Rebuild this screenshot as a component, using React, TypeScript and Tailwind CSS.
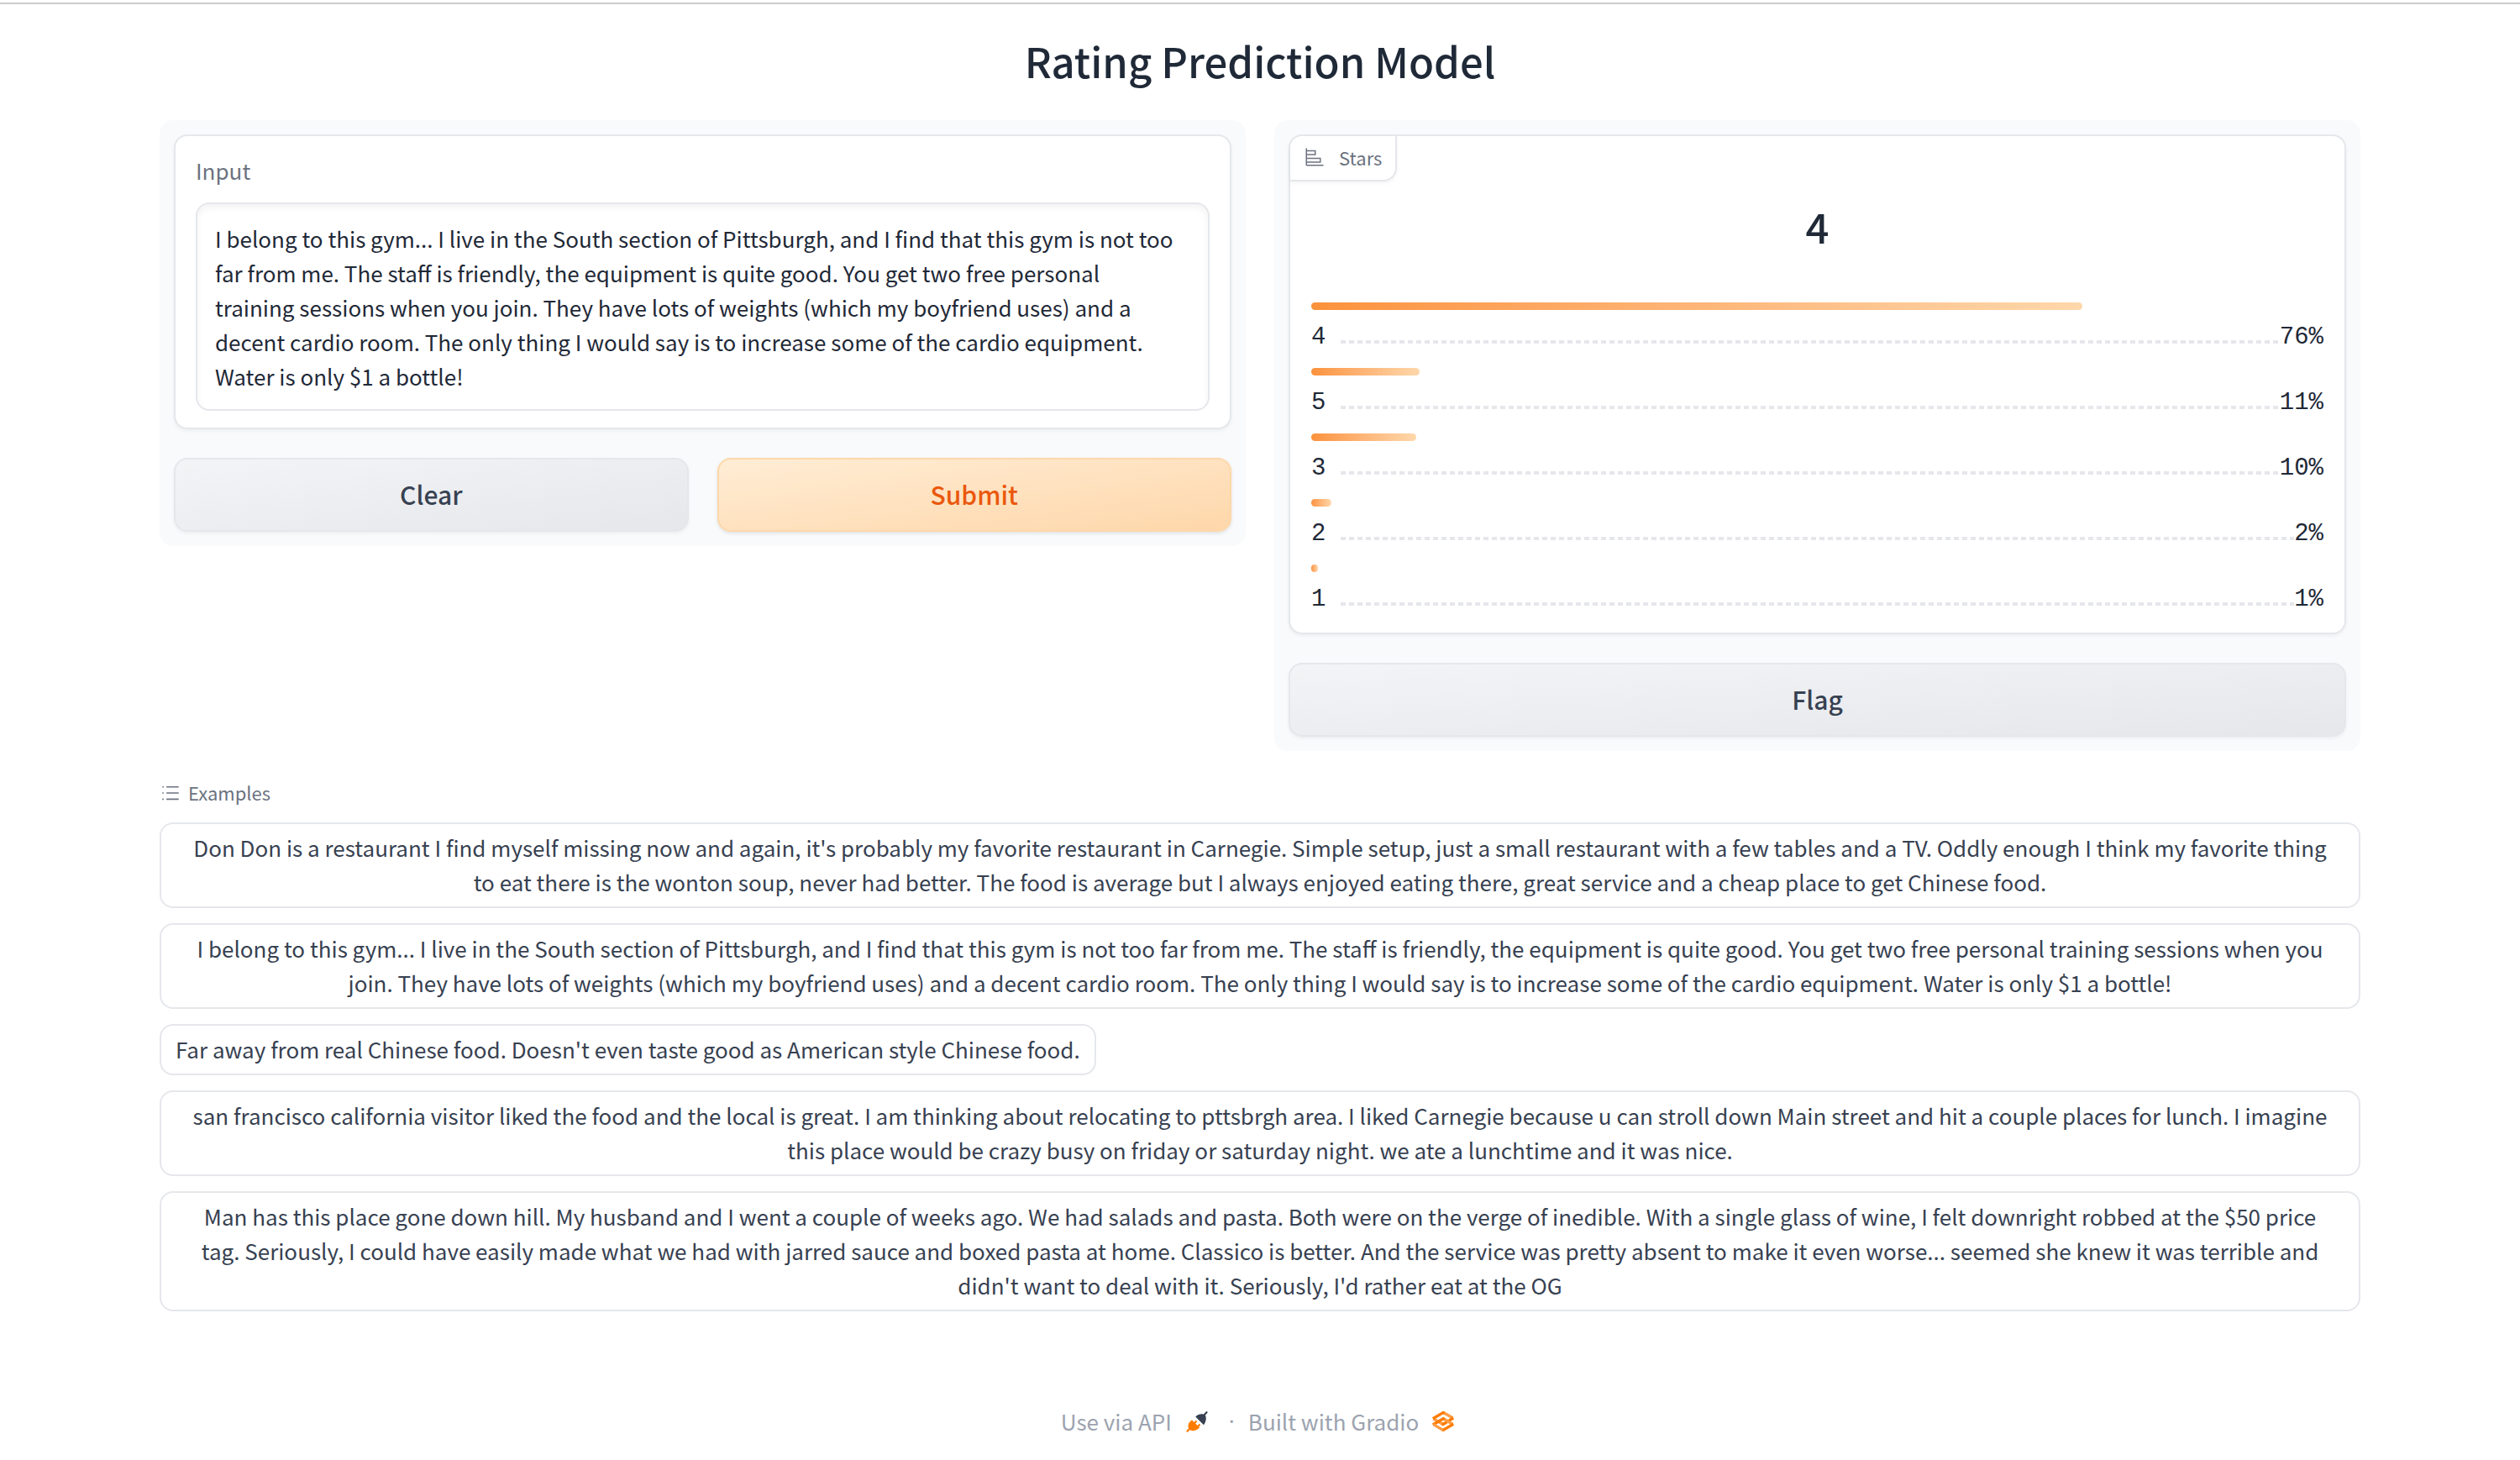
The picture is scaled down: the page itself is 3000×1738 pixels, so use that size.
import type { ReactNode } from "react";

const review = `I belong to this gym... I live in the South section of Pittsburgh, and I find that this gym is not too
far from me. The staff is friendly, the equipment is quite good. You get two free personal
training sessions when you join. They have lots of weights (which my boyfriend uses) and a
decent cardio room. The only thing I would say is to increase some of the cardio equipment.
Water is only $1 a bottle!`;

const examples = [
  `Don Don is a restaurant I find myself missing now and again, it's probably my favorite restaurant in Carnegie. Simple setup, just a small restaurant with a few tables and a TV. Oddly enough I think my favorite thing
to eat there is the wonton soup, never had better. The food is average but I always enjoyed eating there, great service and a cheap place to get Chinese food.`,
  `I belong to this gym... I live in the South section of Pittsburgh, and I find that this gym is not too far from me. The staff is friendly, the equipment is quite good. You get two free personal training sessions when you
join. They have lots of weights (which my boyfriend uses) and a decent cardio room. The only thing I would say is to increase some of the cardio equipment. Water is only $1 a bottle!`,
  `Far away from real Chinese food. Doesn't even taste good as American style Chinese food.`,
  `san francisco california visitor liked the food and the local is great. I am thinking about relocating to pttsbrgh area. I liked Carnegie because u can stroll down Main street and hit a couple places for lunch. I imagine
this place would be crazy busy on friday or saturday night. we ate a lunchtime and it was nice.`,
  `Man has this place gone down hill. My husband and I went a couple of weeks ago. We had salads and pasta. Both were on the verge of inedible. With a single glass of wine, I felt downright robbed at the $50 price
tag. Seriously, I could have easily made what we had with jarred sauce and boxed pasta at home. Classico is better. And the service was pretty absent to make it even worse... seemed she knew it was terrible and
didn't want to deal with it. Seriously, I'd rather eat at the OG`,
];

const confidences = [
  { label: "4", percent: 76, width: "76.2%" },
  { label: "5", percent: 11, width: "10.7%" },
  { label: "3", percent: 10, width: "10.4%" },
  { label: "2", percent: 2, width: "2%" },
  { label: "1", percent: 1, width: "0.66%" },
];

function ChartIcon() {
  return (
    <svg viewBox="0 0 32 32" className="size-6" fill="currentColor" aria-hidden="true">
      <path d="M4 2H2v26a2 2 0 0 0 2 2h26v-2H4v-3h22v-8H4v-4h14V5H4Zm20 17v4H4v-4ZM16 7v4H4V7Z" />
    </svg>
  );
}

function ListIcon() {
  return (
    <svg viewBox="0 0 32 32" className="size-[26px]" fill="currentColor" aria-hidden="true">
      <path d="M10 6h18v2H10zm0 18h18v2H10zm0-9h18v2H10zm-6 0h2v2H4zm0-9h2v2H4zm0 18h2v2H4z" />
    </svg>
  );
}

function PlugIcon() {
  return (
    <svg viewBox="0 0 28 28" className="size-7" aria-hidden="true">
      <path d="M25.5 3.2 22 7" stroke="#374151" strokeWidth="2.2" strokeLinecap="round" />
      <path d="M12.2 8.600 22 18.200c2.600-3.200 3.600-8 2-11.200-3.400-2.800-8-1.800-11.800 1.600z" fill="#374151" />
      <path d="M2.500 25.800 6 22" stroke="#ff7c00" strokeWidth="2.2" strokeLinecap="round" />
      <path
        d="M8 12.500l2.600 2.500 2-2.200 1.600 1.500-2 2.200 2.400 2.400 2-2.200 1.600 1.500-2 2.200.9.9c-2.600 3.700-8.600 5.200-12.100 2.400-3-3.400-1.200-9 3-11.200z"
        fill="#ff7c00"
      />
    </svg>
  );
}

function GradioIcon() {
  return (
    <svg viewBox="0 0 26 26" className="size-[26px]" fill="none" strokeWidth="3.4" aria-hidden="true">
      <path d="M13 2.200 24.500 9" stroke="#ff9d47" />
      <path d="M1.500 10 13 16.500" stroke="#ff9d47" />
      <path d="M0.800 9.800 13 2.600l1.500.8" stroke="#ff7c00" />
      <path d="M25.200 9 13 16.500l-1.500-.8" stroke="#ff7c00" />
      <path d="M13 9.500 24.500 16.500" stroke="#ff9d47" />
      <path d="M14.500 9 .8 17" stroke="#ff7c00" />
      <path d="M1.500 16.600 13 23.400l1 -.6" stroke="#ff9d47" />
      <path d="M25.200 16.200 13 23.400" stroke="#ff7c00" />
    </svg>
  );
}

function Panel({ children }: { children: ReactNode }) {
  return <section className="flex min-w-0 flex-col gap-[34px] rounded-2xl bg-[#f9fafb] p-[17px]">{children}</section>;
}

const secondary =
  "h-[88px] flex-1 rounded-2xl border-2 border-[#e5e7eb] bg-linear-to-br from-[#f3f4f6] to-[#e5e7eb] pb-0.5 text-[30px] leading-10 font-medium text-[#374151] shadow-[0_2px_4px_rgba(0,0,0,0.05)]";

export default function App() {
  return (
    <div className="bg-white pt-[3px] font-['Noto_Sans_CJK_SC',sans-serif] text-[26px] leading-[41px] text-[#1f2937]">
      <div className="border-t-2 border-[#cccccc]" />
      <main className="mx-auto max-w-[2620px]">
        <h1 className="pt-[35px] text-center text-[49px] leading-16 font-medium">Rating Prediction Model</h1>

        <div className="mt-[39px] grid grid-cols-2 items-start gap-[34px]">
          <Panel>
            <div className="flex flex-col rounded-2xl border-2 border-[#e5e7eb] bg-white px-6 pt-5 pb-5 shadow-[0_2px_4px_rgba(0,0,0,0.05)]">
              <label htmlFor="input" className="text-[#6b7280]">
                Input
              </label>
              <textarea
                id="input"
                rows={5}
                defaultValue={review}
                className="mt-[18px] block resize-none overflow-hidden rounded-2xl border-2 border-[#e5e7eb] bg-white px-[21px] pt-5 pb-[19px] inset-shadow-[0_4px_8px_rgba(0,0,0,0.05)]"
              />
            </div>
            <div className="flex gap-[34px]">
              <button type="button" className={secondary}>
                Clear
              </button>
              <button
                type="button"
                className="h-[88px] flex-1 rounded-2xl border-2 border-[#fed7aa] bg-linear-to-br from-[#ffedd5] to-[#fed7aa] pb-0.5 text-[30px] leading-10 font-medium text-[#ea580c] shadow-[0_2px_4px_rgba(0,0,0,0.1)]"
              >
                Submit
              </button>
            </div>
          </Panel>

          <Panel>
            <div className="rounded-2xl border-2 border-[#e5e7eb] bg-white pb-4 shadow-[0_2px_4px_rgba(0,0,0,0.05)]">
              <div className="flex h-[54px] w-fit items-center gap-[17px] rounded-tl-2xl rounded-br-2xl border-r-2 border-b-2 border-[#e5e7eb] pr-4 pb-0.5 pl-[17px] text-[22px] text-[#6b7280] shadow-[0_2px_4px_rgba(0,0,0,0.05)]">
                <ChartIcon />
                Stars
              </div>
              <h2 className="pt-[21px] text-center text-[49px] leading-16 font-medium">4</h2>
              <dl className="mt-[59px] flex flex-col gap-[13px] px-[25px]">
                {confidences.map((c) => (
                  <div key={c.label}>
                    <div
                      className="h-[9px] rounded-full bg-linear-to-r from-[#fb923c] to-[#fed7aa]"
                      style={{ width: c.width }}
                    />
                    <div className="mt-2.5 flex items-baseline font-['Liberation_Mono',monospace] text-[29px] leading-[46px]">
                      <dt>{c.label}</dt>
                      <div className="ml-[18px] h-1 flex-1 bg-[repeating-linear-gradient(90deg,#e5e7eb_0_6px,transparent_6px_10px)]" />
                      <dd>{c.percent}%</dd>
                    </div>
                  </div>
                ))}
              </dl>
            </div>
            <div className="flex">
              <button type="button" className={secondary}>
                Flag
              </button>
            </div>
          </Panel>
        </div>

        <section className="mt-[29px]">
          <h2 className="flex items-center gap-2 text-[22px] text-[#6b7280]">
            <ListIcon />
            Examples
          </h2>
          <div className="mt-[15px] flex flex-col items-start gap-[18px]">
            {examples.map((text) => (
              <button
                key={text}
                type="button"
                className="rounded-2xl border-2 border-[#e5e7eb] bg-white px-[17px] pt-[7px] pb-[9px] text-center whitespace-pre-line text-[#374151] [&:not(:nth-child(3))]:w-full"
              >
                {text}
              </button>
            ))}
          </div>
        </section>

        <footer className="mt-[110px] flex items-center justify-center pr-1.5 text-[#9ca3af]">
          <a href="#api" className="flex items-center gap-4">
            Use via API
            <PlugIcon />
          </a>
          <span className="mr-4 ml-6 font-['Noto_Sans',sans-serif]">·</span>
          <a href="#gradio" className="flex items-center gap-4">
            Built with Gradio
            <GradioIcon />
          </a>
        </footer>
      </main>
    </div>
  );
}
